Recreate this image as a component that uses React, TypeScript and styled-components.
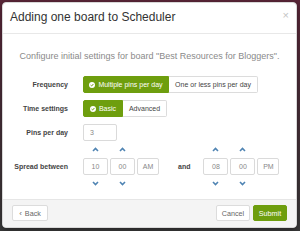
import styled, { createGlobalStyle } from "styled-components";

const GREEN = "#6e9e0e";
const CHEVRON = "#4f84b3";

const Global = createGlobalStyle`
  html, body {
    margin: 0;
    padding: 0;
    background: #3a3236;
  }
  * {
    box-sizing: border-box;
  }
`;

const Backdrop = styled.div`
  width: 300px;
  height: 231px;
  overflow: hidden;
  background: linear-gradient(180deg, #5a2638 0%, #4a2d38 40%, #3a3a3a 100%);
  padding: 2px 3px 0 2px;
  font-family: "Liberation Sans", Arial, sans-serif;
`;

const Modal = styled.div`
  width: 295px;
  height: 226px;
  background: #fff;
  border-radius: 4px;
  border: 1px solid #d8d8d8;
  box-shadow: 0 2px 6px rgba(0, 0, 0, 0.4);
  display: flex;
  flex-direction: column;
  overflow: hidden;
`;

const Header = styled.div`
  height: 31px;
  flex: 0 0 31px;
  border-bottom: 1px solid #e8e8e8;
  display: flex;
  align-items: center;
  justify-content: space-between;
  padding: 0 7px 2px 7px;
`;

const Title = styled.h1`
  margin: 0;
  font-size: 12px;
  font-weight: normal;
  color: #333;
  line-height: 14px;
`;

const Close = styled.span`
  font-size: 11px;
  color: #c4c4c4;
  line-height: 10px;
  margin-top: -4px;
`;

const Body = styled.div`
  flex: 1;
  padding-top: 17px;
`;

const Intro = styled.p`
  margin: 0;
  text-align: center;
  font-size: 9px;
  line-height: 11px;
  color: #8a8a8a;
`;

const Form = styled.div`
  margin-top: 14px;
  display: flex;
  flex-direction: column;
`;

const Row = styled.div<{ $gap?: number }>`
  display: flex;
  align-items: center;
  margin-top: ${(p) => p.$gap ?? 0}px;
`;

const Label = styled.div`
  width: 65px;
  margin-right: 15px;
  text-align: right;
  font-size: 7px;
  font-weight: bold;
  color: #444;
`;

const Group = styled.div`
  display: flex;
`;

const Toggle = styled.div<{ $on?: boolean; $w: number }>`
  width: ${(p) => p.$w}px;
  height: 17px;
  display: flex;
  align-items: center;
  justify-content: center;
  gap: 3px;
  font-size: 7px;
  white-space: nowrap;
  color: ${(p) => (p.$on ? "#fff" : "#444")};
  background: ${(p) => (p.$on ? GREEN : "#fff")};
  border: 1px solid ${(p) => (p.$on ? GREEN : "#dcdcdc")};
  &:first-child {
    border-radius: 2px 0 0 2px;
  }
  &:last-child {
    border-radius: 0 2px 2px 0;
    border-left: none;
  }
`;

const Field = styled.div<{ $w: number; $center?: boolean }>`
  width: ${(p) => p.$w}px;
  height: 17px;
  border: 1px solid #dadada;
  border-radius: 2px;
  background: #fff;
  display: flex;
  align-items: center;
  justify-content: ${(p) => (p.$center ? "center" : "flex-start")};
  padding-left: ${(p) => (p.$center ? 0 : 6)}px;
  font-size: 7px;
  color: #888;
`;

const Picker = styled.div`
  display: flex;
  align-items: center;
  gap: 2px;
`;

const Spinner = styled.div`
  display: flex;
  flex-direction: column;
  align-items: center;
`;

const Arrow = styled.div<{ $down?: boolean }>`
  height: 8px;
  display: flex;
  align-items: center;
  justify-content: center;
  margin: ${(p) => (p.$down ? "4px 0 0" : "0 0 5px")};
`;

const Addon = styled.div`
  align-self: center;
  width: 22px;
  height: 17px;
  border: 1px solid #dadada;
  border-radius: 2px;
  display: flex;
  align-items: center;
  justify-content: center;
  font-size: 7px;
  color: #888;
`;

const And = styled.div`
  font-size: 7px;
  font-weight: bold;
  color: #444;
  margin: 0 13px 0 19px;
`;

const Footer = styled.div`
  height: 28px;
  flex: 0 0 28px;
  border-top: 1px solid #e6e6e6;
  background: #f4f4f4;
  display: flex;
  align-items: center;
  justify-content: space-between;
  padding: 0 9px 1px 9px;
`;

const Actions = styled.div`
  display: flex;
  gap: 3px;
`;

const Button = styled.div<{ $primary?: boolean; $w: number }>`
  width: ${(p) => p.$w}px;
  height: 16px;
  border-radius: 2px;
  display: flex;
  align-items: center;
  justify-content: center;
  gap: 3px;
  font-size: 7.2px;
  color: ${(p) => (p.$primary ? "#fff" : "#666")};
  background: ${(p) => (p.$primary ? GREEN : "#fff")};
  border: 1px solid ${(p) => (p.$primary ? GREEN : "#dcdcdc")};
`;

const BackMark = styled.span`
  font-size: 8px;
`;

function Check() {
  return (
    <svg width="6" height="6" viewBox="0 0 6 6">
      <circle cx="3" cy="3" r="3" fill="#fff" />
      <polyline points="1.6,3.1 2.6,4 4.4,2" fill="none" stroke={GREEN} strokeWidth="1" />
    </svg>
  );
}

function Chevron({ down }: { down?: boolean }) {
  return (
    <svg width="7" height="5" viewBox="0 0 7 5">
      <polyline
        points={down ? "1,1 3.5,3.5 6,1" : "1,4 3.5,1.5 6,4"}
        fill="none"
        stroke={CHEVRON}
        strokeWidth="1.6"
      />
    </svg>
  );
}

function Spin({ value }: { value: string }) {
  return (
    <Spinner>
      <Arrow>
        <Chevron />
      </Arrow>
      <Field $w={25} $center>
        {value}
      </Field>
      <Arrow $down>
        <Chevron down />
      </Arrow>
    </Spinner>
  );
}

function TimePicker({ h, m, ampm }: { h: string; m: string; ampm: string }) {
  return (
    <Picker>
      <Spin value={h} />
      <Spin value={m} />
      <Addon>{ampm}</Addon>
    </Picker>
  );
}

export default function App() {
  return (
    <Backdrop>
      <Global />
      <Modal>
        <Header>
          <Title>Adding one board to Scheduler</Title>
          <Close>×</Close>
        </Header>
        <Body>
          <Intro>Configure initial settings for board "Best Resources for Bloggers".</Intro>
          <Form>
            <Row>
              <Label>Frequency</Label>
              <Group>
                <Toggle $on $w={86}>
                  <Check />
                  Multiple pins per day
                </Toggle>
                <Toggle $w={89}>One or less pins per day</Toggle>
              </Group>
            </Row>
            <Row $gap={7}>
              <Label>Time settings</Label>
              <Group>
                <Toggle $on $w={40}>
                  <Check />
                  Basic
                </Toggle>
                <Toggle $w={44}>Advanced</Toggle>
              </Group>
            </Row>
            <Row $gap={7}>
              <Label>Pins per day</Label>
              <Field $w={34}>3</Field>
            </Row>
            <Row $gap={4}>
              <Label>Spread between</Label>
              <TimePicker h="10" m="00" ampm="AM" />
              <And>and</And>
              <TimePicker h="08" m="00" ampm="PM" />
            </Row>
          </Form>
        </Body>
        <Footer>
          <Button $w={36}>
            <BackMark>‹</BackMark> Back
          </Button>
          <Actions>
            <Button $w={34}>Cancel</Button>
            <Button $w={34} $primary>
              Submit
            </Button>
          </Actions>
        </Footer>
      </Modal>
    </Backdrop>
  );
}
